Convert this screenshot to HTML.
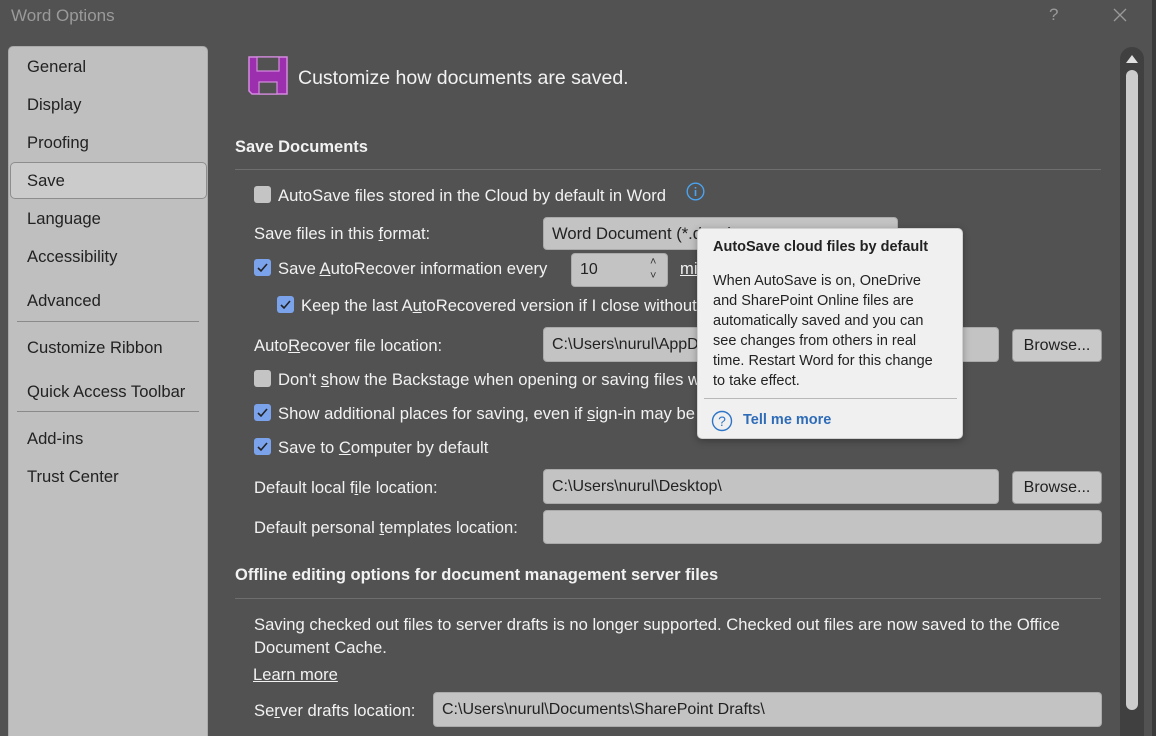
<!DOCTYPE html>
<html><head><style>
*{margin:0;padding:0;box-sizing:border-box}
html,body{width:1156px;height:736px;overflow:hidden}
body{background:#3a3a3a;font-family:"Liberation Sans",sans-serif;color:#f2f2f2;position:relative}
.win{position:absolute;left:0;top:0;width:1152px;height:736px;background:#525252;overflow:hidden}
.a{position:absolute;white-space:nowrap}
.t{font-size:16.6px;line-height:20px}
.side{position:absolute;left:8px;top:46px;width:200px;height:700px;background:#bfbfbf;border:1px solid #aaa;border-radius:5px}
.si{position:absolute;left:27px;font-size:16.6px;color:#222}
.sep{position:absolute;left:17px;width:182px;height:1px;background:#8a8a8a}
.cb{position:absolute;width:17px;height:17px;border-radius:3px;background:#c4c4c4}
.cb.on{background:#7ba3ec}
.cb.on svg{position:absolute;left:3px;top:3px}
.box{position:absolute;background:#c3c3c3;border:1px solid #aaa;border-radius:4px;color:#222;font-size:16px;padding-left:8px;white-space:nowrap;overflow:hidden}
.btn{position:absolute;background:#c9c9c9;border:1px solid #999;border-radius:4px;color:#222;font-size:16px;text-align:center;line-height:31px}
.hr{position:absolute;left:235px;width:866px;height:1px;background:#6e6e6e}
u{text-decoration:underline}
</style></head><body>
<div class="win">
<div class="a" style="left:11px;top:6px;font-size:17px;color:#9a9a9a">Word Options</div>
<div class="a" style="left:1049px;top:5px;font-size:17px;color:#9a9a9a">?</div>
<svg class="a" style="left:1113px;top:8px" width="14" height="14"><path d="M1 1L13 13M13 1L1 13" stroke="#9a9a9a" stroke-width="1.3"/></svg>

<div class="side"></div>
<div class="a" style="left:10px;top:162px;width:197px;height:37px;background:#cbcbcb;border:1px solid #8d8d8d;border-radius:5px"></div>
<div class="a si" style="top:57px">General</div>
<div class="a si" style="top:95px">Display</div>
<div class="a si" style="top:133px">Proofing</div>
<div class="a si" style="top:171px">Save</div>
<div class="a si" style="top:209px">Language</div>
<div class="a si" style="top:247px">Accessibility</div>
<div class="a si" style="top:291px">Advanced</div>
<div class="sep" style="top:321px"></div>
<div class="a si" style="top:338px">Customize Ribbon</div>
<div class="a si" style="top:382px">Quick Access Toolbar</div>
<div class="sep" style="top:411px"></div>
<div class="a si" style="top:429px">Add-ins</div>
<div class="a si" style="top:467px">Trust Center</div>

<svg class="a" style="left:248px;top:56px" width="40" height="39"><path d="M1 1H39V38H4L1 35Z" fill="#9b2fae" stroke="#d58be0" stroke-width="1.5"/><rect x="9" y="1" width="22" height="14" fill="#525252" stroke="#d58be0" stroke-width="1.2"/><rect x="11" y="26" width="18" height="12" fill="#525252" stroke="#d58be0" stroke-width="1.2"/></svg>
<div class="a" style="left:298px;top:67px;font-size:19.5px">Customize how documents are saved.</div>

<div class="a" style="left:235px;top:138px;font-size:16.5px;font-weight:bold">Save Documents</div>
<div class="hr" style="top:169px"></div>

<div class="cb" style="left:254px;top:186px"></div>
<div class="a t" style="left:278px;top:186px">AutoSave files stored in the Cloud by default in Word</div>
<svg class="a" style="left:686px;top:182px" width="19" height="19"><circle cx="9.5" cy="9.5" r="8.3" fill="none" stroke="#4aa3f0" stroke-width="1.4"/><rect x="8.7" y="8" width="1.6" height="6" fill="#4aa3f0"/><rect x="8.7" y="5" width="1.6" height="1.6" fill="#4aa3f0"/></svg>

<div class="a t" style="left:254px;top:224px">Save files in this <u>f</u>ormat:</div>
<div class="box" style="left:543px;top:217px;width:355px;height:33px;line-height:31px;font-size:16.6px">Word Document (*.docx)</div>

<div class="cb on" style="left:254px;top:259px"><svg width="11" height="11"><path d="M1 6L4 9L10 2" stroke="#222" stroke-width="1.6" fill="none"/></svg></div>
<div class="a t" style="left:278px;top:259px">Save <u>A</u>utoRecover information every</div>
<div class="box" style="left:571px;top:253px;width:97px;height:34px;line-height:32px">10</div>
<div class="a" style="left:650px;top:256px;font-size:11px;color:#333">˄</div>
<div class="a" style="left:650px;top:270px;font-size:11px;color:#333">˅</div>
<div class="a t" style="left:680px;top:259px"><u>mi</u>nutes</div>

<div class="cb on" style="left:277px;top:296px"><svg width="11" height="11"><path d="M1 6L4 9L10 2" stroke="#222" stroke-width="1.6" fill="none"/></svg></div>
<div class="a t" style="left:301px;top:296px">Keep the last A<u>u</u>toRecovered version if I close without saving</div>

<div class="a t" style="left:254px;top:336px">Auto<u>R</u>ecover file location:</div>
<div class="box" style="left:543px;top:327px;width:456px;height:35px;line-height:33px">C:\Users\nurul\AppData\Roaming\Microsoft\Word\</div>
<div class="btn" style="left:1012px;top:329px;width:90px;height:33px">Browse...</div>

<div class="cb" style="left:254px;top:370px"></div>
<div class="a t" style="left:278px;top:370px">Don't <u>s</u>how the Backstage when opening or saving files with keyboard shortcuts</div>
<div class="cb on" style="left:254px;top:404px"><svg width="11" height="11"><path d="M1 6L4 9L10 2" stroke="#222" stroke-width="1.6" fill="none"/></svg></div>
<div class="a t" style="left:278px;top:404px">Show additional places for saving, even if <u>s</u>ign-in may be required.</div>
<div class="cb on" style="left:254px;top:438px"><svg width="11" height="11"><path d="M1 6L4 9L10 2" stroke="#222" stroke-width="1.6" fill="none"/></svg></div>
<div class="a t" style="left:278px;top:438px">Save to <u>C</u>omputer by default</div>

<div class="a t" style="left:254px;top:478px">Default local f<u>i</u>le location:</div>
<div class="box" style="left:543px;top:469px;width:456px;height:35px;line-height:33px">C:\Users\nurul\Desktop\</div>
<div class="btn" style="left:1012px;top:471px;width:90px;height:33px">Browse...</div>

<div class="a t" style="left:254px;top:518px">Default personal <u>t</u>emplates location:</div>
<div class="box" style="left:543px;top:510px;width:559px;height:34px"></div>

<div class="a" style="left:235px;top:566px;font-size:16.5px;font-weight:bold">Offline editing options for document management server files</div>
<div class="hr" style="top:598px"></div>
<div class="a t" style="left:254px;top:613px;line-height:23px">Saving checked out files to server drafts is no longer supported. Checked out files are now saved to the Office<br>Document Cache.</div>
<div class="a t" style="left:253px;top:665px"><u>Learn more</u></div>
<div class="a t" style="left:254px;top:701px">Se<u>r</u>ver drafts location:</div>
<div class="box" style="left:433px;top:692px;width:669px;height:35px;line-height:33px">C:\Users\nurul\Documents\SharePoint Drafts\</div>

<div class="a" style="left:1120px;top:47px;width:24px;height:700px;background:#404040;border-radius:12px 12px 0 0"></div>
<svg class="a" style="left:1125px;top:54px" width="14" height="10"><path d="M7 1L13 9H1Z" fill="#e0e0e0"/></svg>
<div class="a" style="left:1126px;top:70px;width:12px;height:640px;background:#cccccc;border-radius:6px"></div>

<div class="a" style="left:697px;top:228px;width:266px;height:211px;background:#f0f0f0;border:1px solid #d0d0d0;border-radius:5px;box-shadow:0 2px 8px rgba(0,0,0,.3);color:#222">
<div class="a" style="left:15px;top:10px;font-size:14.5px;font-weight:bold">AutoSave cloud files by default</div>
<div class="a" style="left:15px;top:42px;font-size:14.5px;line-height:20px">When AutoSave is on, OneDrive<br>and SharePoint Online files are<br>automatically saved and you can<br>see changes from others in real<br>time. Restart Word for this change<br>to take effect.</div>
<div class="a" style="left:6px;top:169px;width:253px;height:1px;background:#b8b8b8"></div>
<svg class="a" style="left:13px;top:181px" width="22" height="22"><circle cx="11" cy="11" r="9.5" fill="none" stroke="#2e75c8" stroke-width="1.4"/><text x="11" y="16" text-anchor="middle" font-size="14" fill="#2e75c8" font-family="Liberation Sans">?</text></svg>
<div class="a" style="left:45px;top:183px;font-size:14.5px;font-weight:bold;color:#2e6cb8">Tell me more</div>
</div>
</div>
</body></html>
